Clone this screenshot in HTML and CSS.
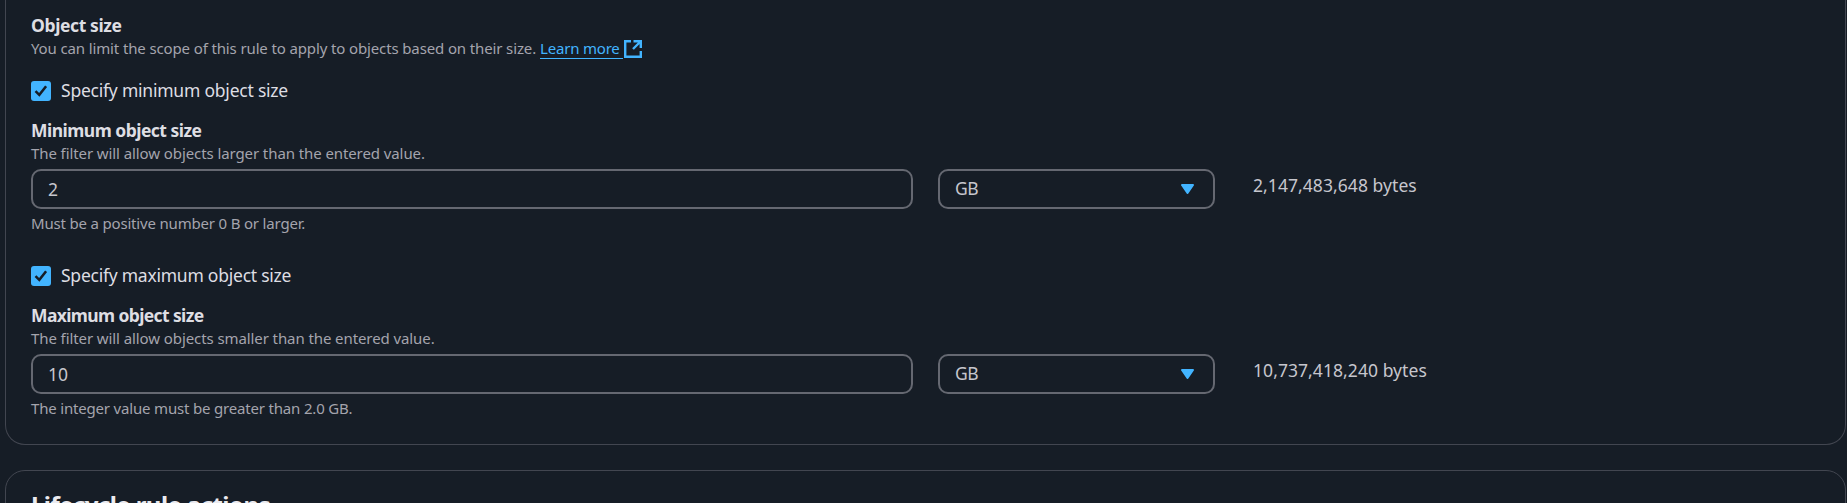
FILE: index.html
```html
<!DOCTYPE html>
<html lang="en">
<head>
<meta charset="utf-8">
<title>Lifecycle rule</title>
<link rel="stylesheet" href="styles.css">
</head>
<body>
<main class="page">
  <section class="card card-scope">
    <h3 class="label label-object">Object size</h3>
    <p class="hint hint-scope"><span>You can limit the scope of this rule to apply to objects based on their size.</span> <a class="link" href="#">Learn more</a><svg class="external" viewBox="0 0 18 18"><path d="M7 1.2H1.2v15.6h15.6V11M9.5 1.2h7.3V8M16.5 1.5L9 9"/></svg></p>

    <div class="group">
      <label class="check"><span class="box"><svg viewBox="0 0 20 20"><path d="M4.5 10.2l3.8 3.6 6.8-8.6"/></svg></span><span class="check-min">Specify minimum object size</span></label>
      <h3 class="label label-min">Minimum object size</h3>
      <p class="hint hint-larger">The filter will allow objects larger than the entered value.</p>
      <div class="row">
        <div class="control">2</div>
        <div class="control select"><span>GB</span><svg class="caret" viewBox="0 0 13 10"><path d="M1 1h11L6.5 9z"/></svg></div>
        <div class="bytes">2,147,483,648 bytes</div>
      </div>
      <p class="hint constraint">Must be a positive number 0 B or larger.</p>
    </div>

    <div class="group">
      <label class="check"><span class="box"><svg viewBox="0 0 20 20"><path d="M4.5 10.2l3.8 3.6 6.8-8.6"/></svg></span><span class="check-max">Specify maximum object size</span></label>
      <h3 class="label label-max">Maximum object size</h3>
      <p class="hint hint-smaller">The filter will allow objects smaller than the entered value.</p>
      <div class="row">
        <div class="control">10</div>
        <div class="control select"><span>GB</span><svg class="caret" viewBox="0 0 13 10"><path d="M1 1h11L6.5 9z"/></svg></div>
        <div class="bytes">10,737,418,240 bytes</div>
      </div>
      <p class="hint constraint">The integer value must be greater than 2.0 GB.</p>
    </div>
  </section>
  <section class="card card-actions">
    <h2 class="title">Lifecycle rule actions</h2>
  </section>
</main>
</body>
</html>
```
FILE: styles.css
```css
* { box-sizing: border-box; }
html, body { height: 100%; }
body {
  margin: 0;
  overflow: hidden;
  background: #161d26;
  color: #c6c6cd;
  font: 17.5px/25px "Noto Sans", "Open Sans", sans-serif;
}
h2, h3, p { margin: 0; }
.page {
  height: 503px;
  overflow: hidden;
  display: flex;
  flex-direction: column;
  gap: 25px;
  padding: 0 1px 0 5px;
}
.card {
  flex: none;
  border: 1px solid #424650;
  border-radius: 20px;
  padding: 0 25px;
}
.card-scope {
  height: 445px;
  border-top: 0;
  border-radius: 0 0 20px 20px;
  padding-top: 13px;
}
.card-actions { height: 100px; padding-top: 18px; }
.label { color: #dedee3; font-size: 17.5px; font-weight: 700; line-height: 25px; }
.label-object { letter-spacing: -.38px; }
.label-min { letter-spacing: -.52px; }
.label-max { letter-spacing: -.62px; }
.hint { color: #a4a4ad; font-size: 15px; line-height: 20px; letter-spacing: -.18px; }
.hint-scope { display: flex; align-items: flex-start; gap: 4px; height: 20px; letter-spacing: -.13px; }
.hint-larger, .hint-smaller { letter-spacing: -.09px; }
.link {
  color: #42b4ff;
  height: 21px;
  padding-right: 3px;
  border-bottom: 1px solid #42b4ff;
  text-decoration: none;
  letter-spacing: -.2px;
}
.external { width: 18px; height: 18px; margin: 2px 0 0 -3px; fill: none; stroke: #42b4ff; stroke-width: 2.4; }
.group { display: grid; }
.group .label { margin-top: 15px; }
.group + .group { margin-top: 30px; }
.label-object + .hint + .group { margin-top: 20px; }
.check { display: flex; align-items: center; gap: 10px; height: 25px; color: #dedee3; }
.check-min { letter-spacing: -.22px; }
.check-max { letter-spacing: -.24px; }
.box { width: 20px; height: 20px; border-radius: 3px; background: #42b4ff; }
.box svg { display: block; width: 20px; height: 20px; fill: none; stroke: #161d26; stroke-width: 2.5; }
.row { display: grid; grid-template-columns: 882px 277px auto; gap: 25px; margin-top: 6px; }
.control {
  height: 40px;
  border: 2px solid #656871;
  border-radius: 10px;
  padding: 5px 15px;
  line-height: 26px;
}
.select { display: flex; justify-content: space-between; padding: 4px 19px 6px 15px; letter-spacing: -.6px; }
.caret { width: 13px; height: 10px; margin-top: 9px; fill: #42b4ff; stroke: #42b4ff; stroke-width: 2; stroke-linejoin: round; }
.bytes { padding: 4px 0 0 13px; letter-spacing: .06px; }
.constraint { margin-top: 4px; }
.title { color: #ebebf0; font-size: 24px; line-height: 32px; letter-spacing: -.57px; }
```
